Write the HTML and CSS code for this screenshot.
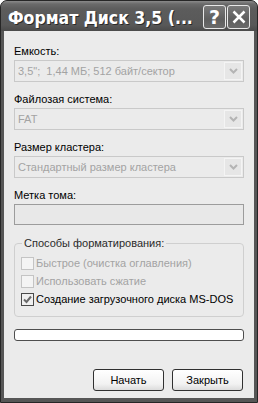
FILE: index.html
```html
<!DOCTYPE html>
<html lang="ru">
<head>
    <meta charset="UTF-8">
    <meta name="viewport" content="width=device-width, initial-scale=1.0">
    <title>Формат Диск 3,5</title>
    <link rel="stylesheet" href="styles.css">
</head>
<body>
    <div class="window">
        <div class="titlebar">
            <span class="title">Формат Диск 3,5 (...</span>
            <div class="title-buttons">
                <div class="tbtn">?</div>
                <div class="tbtn">
                    <svg width="14" height="14" viewBox="0 0 14 14">
                        <path d="M1.5 1.5 L12.5 12.5 M12.5 1.5 L1.5 12.5" stroke="#fff" stroke-width="2.5" fill="none"/>
                    </svg>
                </div>
            </div>
        </div>

        <div class="content">
            <div class="field">
                <p class="label">Емкость:</p>
                <div class="combo">
                    <span>3,5";&nbsp; 1,44 МБ; 512 байт/сектор</span>
                    <div class="drop">
                        <svg width="9" height="6" viewBox="0 0 9 6"><path d="M1 1 L4.5 4.5 L8 1" stroke="#b4b4b4" stroke-width="2" fill="none"/></svg>
                    </div>
                </div>
            </div>
            <div class="field">
                <p class="label">Файлозая система:</p>
                <div class="combo">
                    <span>FAT</span>
                    <div class="drop">
                        <svg width="9" height="6" viewBox="0 0 9 6"><path d="M1 1 L4.5 4.5 L8 1" stroke="#b4b4b4" stroke-width="2" fill="none"/></svg>
                    </div>
                </div>
            </div>
            <div class="field">
                <p class="label">Размер кластера:</p>
                <div class="combo">
                    <span>Стандартный размер кластера</span>
                    <div class="drop">
                        <svg width="9" height="6" viewBox="0 0 9 6"><path d="M1 1 L4.5 4.5 L8 1" stroke="#b4b4b4" stroke-width="2" fill="none"/></svg>
                    </div>
                </div>
            </div>
            <div class="field">
                <p class="label">Метка тома:</p>
                <div class="textbox"></div>
            </div>

            <fieldset class="group">
                <legend>Способы форматирования:</legend>
                <div class="check disabled"><span class="box"></span>Быстрое (очистка оглавления)</div>
                <div class="check disabled"><span class="box"></span>Использовать сжатие</div>
                <div class="check">
                    <span class="box checked">
                        <svg width="9" height="9" viewBox="0 0 9 9"><path d="M1 4.5 L3.5 7 L8 1.5" stroke="#6a6a6a" stroke-width="2" fill="none"/></svg>
                    </span>Создание загрузочного диска MS-DOS
                </div>
            </fieldset>

            <div class="progress"></div>

            <div class="buttons">
                <div class="btn">Начать</div>
                <div class="btn">Закрыть</div>
            </div>
        </div>
    </div>
</body>
</html>
```

FILE: styles.css
```css
html, body {
    margin: 0;
    padding: 0;
    background: #ffffff;
}

.window {
    width: 258px;
    height: 403px;
    box-sizing: border-box;
    background: #565656;
    border: 1px solid #262626;
    border-radius: 7px 7px 0 0;
    display: flex;
    flex-direction: column;
    overflow: hidden;
}

.titlebar {
    height: 30px;
    flex-shrink: 0;
    display: flex;
    align-items: flex-start;
    justify-content: space-between;
    background: linear-gradient(#8a8a8a 0, #6a6a6a 3px, #5c5c5c 8px, #585858 24px, #4a4a4a 30px);
    padding: 0 7px 0 7px;
}

.title {
    font-family: "DejaVu Sans Condensed", "DejaVu Sans", sans-serif;
    font-stretch: condensed;
    font-weight: bold;
    font-size: 17.5px;
    color: #ffffff;
    line-height: 20px;
    margin-top: 7px;
    text-shadow: 1px 1px 0 #2a2a2a;
    white-space: nowrap;
}

.title-buttons {
    display: flex;
    gap: 1px;
    margin-top: 4px;
}

.tbtn {
    width: 23px;
    height: 24px;
    box-sizing: border-box;
    border: 1px solid #e8e8e8;
    border-radius: 3px;
    background: linear-gradient(#7a7a7a, #5e5e5e 60%, #6a6a6a);
    color: #ffffff;
    font-family: "DejaVu Sans", sans-serif;
    font-weight: bold;
    font-size: 19px;
    display: flex;
    align-items: center;
    justify-content: center;
}

.content {
    flex: 1;
    margin: 0 3px 4px 3px;
    background: #ebebeb;
    padding: 13px 10px 0 10px;
    font-family: "Liberation Sans", Arial, sans-serif;
    font-size: 11px;
    color: #000000;
    display: flex;
    flex-direction: column;
}

.field {
    margin-bottom: 10px;
}

.label {
    margin: 0 0 2px 0;
    line-height: 14px;
}

.combo {
    height: 22px;
    box-sizing: border-box;
    border: 1px solid #c9c9c9;
    background: #ebebeb;
    color: #a3a3a3;
    display: flex;
    align-items: center;
    justify-content: space-between;
    padding-left: 3px;
}

.drop {
    width: 18px;
    height: 18px;
    margin-right: 1px;
    box-sizing: border-box;
    border: 1px solid #f4f4f4;
    background: #e6e6e6;
    display: flex;
    align-items: center;
    justify-content: center;
}

.textbox {
    height: 21px;
    box-sizing: border-box;
    border: 1px solid #9c9c9c;
    background: #e8e8e8;
}

.group {
    margin: 1px 0 0 0;
    padding: 4px 6px 8px 6px;
    border: 1px solid #cfcfcf;
    border-radius: 4px;
}

.group legend {
    padding: 0 2px;
    margin-left: 1px;
    line-height: 14px;
    color: #2a2a2a;
}

.check {
    display: flex;
    align-items: center;
    height: 18px;
    white-space: nowrap;
}

.check.disabled {
    color: #a3a3a3;
}

.box {
    width: 13px;
    height: 13px;
    box-sizing: border-box;
    border: 1px solid #c4c4c4;
    background: #f4f4f4;
    margin-right: 2px;
    display: flex;
    align-items: center;
    justify-content: center;
}

.box.checked {
    border-color: #4a4a4a;
    background: #f0f0f0;
}

.progress {
    height: 12px;
    margin-top: 12px;
    box-sizing: border-box;
    border: 1px solid #4e4e4e;
    border-radius: 3px;
    background: #ffffff;
}

.buttons {
    display: flex;
    justify-content: flex-end;
    gap: 8px;
    margin-top: 28px;
    padding-right: 1px;
}

.btn {
    width: 71px;
    height: 22px;
    box-sizing: border-box;
    border: 1px solid #303030;
    border-radius: 3px;
    background: linear-gradient(#ffffff, #f2f2f2 70%, #dcdcdc);
    display: flex;
    align-items: center;
    justify-content: center;
}
```
